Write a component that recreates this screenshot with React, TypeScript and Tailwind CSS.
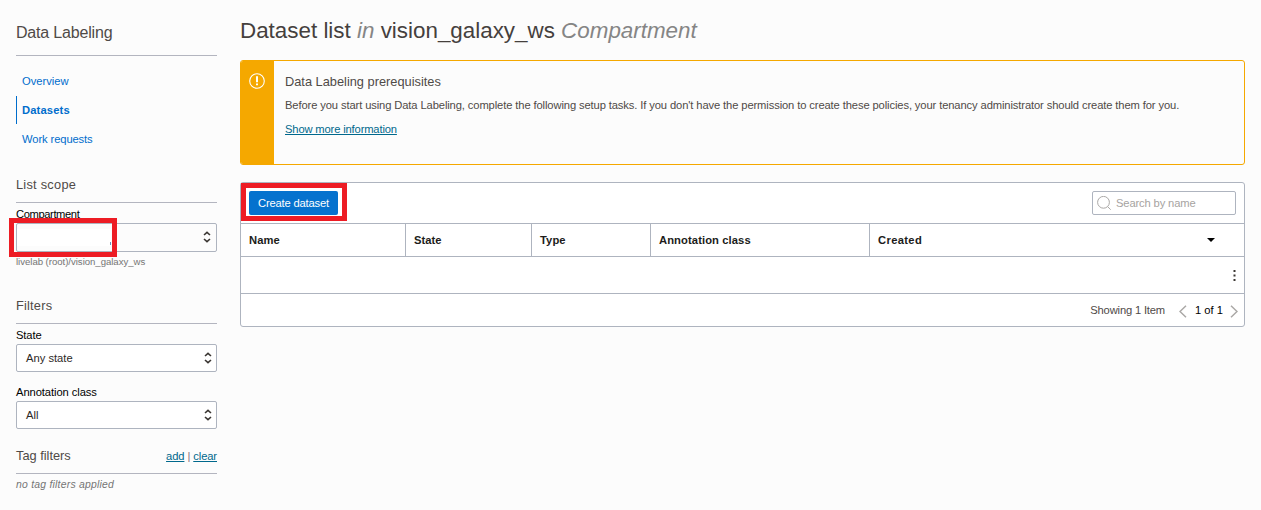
import React from "react";

function UpDown() {
  return (
    <svg width="8" height="12" viewBox="0 0 8 12" fill="none" stroke="#3a3632" strokeWidth="1.6">
      <path d="M1 4 L4 1.4 L7 4 M1 8 L4 10.6 L7 8" />
    </svg>
  );
}

function SelectBox({ label, className = "" }: { label: string; className?: string }) {
  return (
    <div className={`flex h-7 w-[201px] items-center justify-between rounded-[2px] border border-[#aeb4bf] bg-white pr-[4px] pl-[9px] text-[#2d2926] ${className}`}>
      <span>{label}</span>
      <UpDown />
    </div>
  );
}

function Sidebar() {
  return (
    <aside className="flex w-[201px] flex-col">
      <h2 className="flex h-14 items-end border-b border-[#b3b5bf] pb-[10px] text-[16px] leading-[24px] tracking-[-0.18px]">Data Labeling</h2>
      <nav className="mt-[11px] flex flex-col text-[#006dcc]">
        <a className="flex h-7 items-center pl-[6px]">Overview</a>
        <a className="mt-px flex h-7 items-center border-l border-[#006dcc] pl-[5px] font-bold tracking-[0.15px]">Datasets</a>
        <a className="mt-px flex h-7 items-center pl-[6px] tracking-[-0.1px]">Work requests</a>
      </nav>
      <h3 className="mt-[20px] flex h-[30px] items-start border-b border-[#b3b5bf] pt-[3px] text-[12.8px] leading-[18px] tracking-[0.25px]">List scope</h3>
      <div className="relative h-[20px] pt-[4px] leading-[14px] tracking-[-0.4px] text-black">
        Compartment
        <div className="absolute top-[15px] left-[-7px] h-[39px] w-[108px] border-[5px] border-[#ed1c24]" />
      </div>
      <div className="flex h-[29px] items-center justify-between rounded-[2px] border border-[#aeb4bf] pr-[5px]">
        <div className="flex h-[17px] w-[94px] items-end justify-end bg-white">
          <span className="mb-[1px] h-[3px] w-px bg-[#6a90c0]" />
        </div>
        <div className="pb-[2px]"><UpDown /></div>
      </div>
      <div className="mt-[3px] h-[15px] text-[9.6px] leading-[14px] tracking-[-0.03px] text-[#757575]">livelab (root)/vision_galaxy_ws</div>
      <h3 className="mt-[26px] flex h-[28px] items-start border-b border-[#b3b5bf] pt-px text-[12.8px] leading-[18px] tracking-[0.2px]">Filters</h3>
      <label className="h-[20px] pt-[4px] leading-[14px] tracking-[-0.1px] text-black">State</label>
      <SelectBox label="Any state" />
      <label className="mt-[9px] h-[20px] pt-[4px] leading-[14px] tracking-[-0.08px] text-black">Annotation class</label>
      <SelectBox label="All" />
      <div className="mt-[18px] flex h-[27px] items-start justify-between border-b border-[#b3b5bf]">
        <h3 className="text-[12.8px] leading-[18px]">Tag filters</h3>
        <div className="pt-[2px] leading-[15px] tracking-[-0.1px] text-[#00688c]">
          <a className="underline">add</a>
          <span className="text-[#857080]"> | </span>
          <a className="underline">clear</a>
        </div>
      </div>
      <div className="pt-[3px] text-[10.4px] leading-[15px] tracking-[0.23px] text-[#757575] italic">no tag filters applied</div>
    </aside>
  );
}

function Notice() {
  return (
    <section className="flex h-[105px] overflow-hidden rounded-[3px] border border-[#f5a800]">
      <div className="flex w-[33px] bg-[#f5a800] pt-[12px] pl-[8px]">
        <svg width="16" height="16" viewBox="0 0 16 16" fill="none" stroke="white">
          <circle cx="8" cy="8" r="7.3" strokeWidth="1.1" />
          <path d="M8 3.2V9.2M8 10.4V12.2" strokeWidth="2" />
        </svg>
      </div>
      <div className="flex flex-col pt-[12px] pl-[11px]">
        <h3 className="text-[12.8px] leading-[18px]">Data Labeling prerequisites</h3>
        <p className="mt-[6px] leading-[16px] tracking-[-0.115px] whitespace-nowrap">
          Before you start using Data Labeling, complete the following setup tasks. If you don't have the permission to create these policies, your tenancy administrator should create them for you.
        </p>
        <a className="mt-[8px] self-start leading-[16px] tracking-[-0.15px] text-[#00688c] underline">Show more information</a>
      </div>
    </section>
  );
}

function DatasetTable() {
  return (
    <section className="mt-[17px] flex h-[145px] flex-col rounded-[3px] border border-[#aeb4bf] bg-white">
      <div className="flex h-[41px] items-start justify-between border-b border-[#aeb4bf] pr-[8px]">
        <div className="flex h-[38px] w-[106px] items-start border-[5px] border-[#ed1c24] pt-[3px] pl-[3px]">
          <button className="h-6 w-[89px] rounded-[2px] bg-[#0572ce] tracking-[-0.18px] text-white">Create dataset</button>
        </div>
        <div className="mt-[8px] flex h-6 w-[144px] items-center rounded-[2px] border border-[#aeb4bf] pl-[4px] text-[#a6a3a1]">
          <svg width="15" height="15" viewBox="0 0 15 15" fill="none" stroke="#aaa8a6">
            <circle cx="6.5" cy="6.3" r="5.9" />
            <path d="M10.7 10.7 L13.7 13.7" />
          </svg>
          <span className="ml-[4px] tracking-[-0.14px]">Search by name</span>
        </div>
      </div>
      <div className="grid h-[33px] grid-cols-[165px_126px_119px_219px_1fr] border-b border-[#aeb4bf] font-bold text-[#201c1a]">
        <div className="flex items-center border-r border-[#aeb4bf] pl-[8px] tracking-[0.1px]">Name</div>
        <div className="flex items-center border-r border-[#aeb4bf] pl-[8px]">State</div>
        <div className="flex items-center border-r border-[#aeb4bf] pl-[8px] tracking-[0.1px]">Type</div>
        <div className="flex items-center border-r border-[#aeb4bf] pl-[8px] tracking-[0.1px]">Annotation class</div>
        <div className="flex items-center justify-between pr-[29px] pl-[8px] tracking-[0.35px]">
          Created
          <svg width="8" height="4" viewBox="0 0 8 4" fill="black"><path d="M0 0H8L4 4Z" /></svg>
        </div>
      </div>
      <div className="flex h-[37px] items-center justify-end border-b border-[#aeb4bf] pr-[8px]">
        <svg width="3" height="11" viewBox="0 0 3 11" fill="#3a3632">
          <rect x="0.5" width="2" height="2" /><rect x="0.5" y="4.5" width="2" height="2" /><rect x="0.5" y="9" width="2" height="2" />
        </svg>
      </div>
      <div className="flex h-8 items-center justify-end pr-[6px]">
        <span className="tracking-[-0.17px]">Showing 1 Item</span>
        <svg className="mt-[3px] ml-[14px]" width="8" height="13" viewBox="0 0 8 13" fill="none" stroke="#aaa8a6" strokeWidth="1.5"><path d="M7 .8 L1 6.5 L7 12.2" /></svg>
        <span className="ml-[8px] text-black">1 of 1</span>
        <svg className="mt-[3px] ml-[7px]" width="8" height="13" viewBox="0 0 8 13" fill="none" stroke="#aaa8a6" strokeWidth="1.5"><path d="M1 .8 L7 6.5 L1 12.2" /></svg>
      </div>
    </section>
  );
}

export default function App() {
  return (
    <div className="flex h-[510px] w-[1261px] gap-[23px] overflow-hidden bg-[#fcfcfc] pl-4 font-['Liberation_Sans',Arial,sans-serif] text-[11.2px] text-[#4f4a47]">
      <Sidebar />
      <main className="flex w-[1005px] flex-col">
        <h1 className="h-[60px] pt-[17px] text-[22.4px] leading-[28px] text-[#45403d]">
          Dataset list <em className="text-[#858585]">in</em> vision_galaxy_ws <em className="text-[#858585]">Compartment</em>
        </h1>
        <Notice />
        <DatasetTable />
      </main>
    </div>
  );
}
